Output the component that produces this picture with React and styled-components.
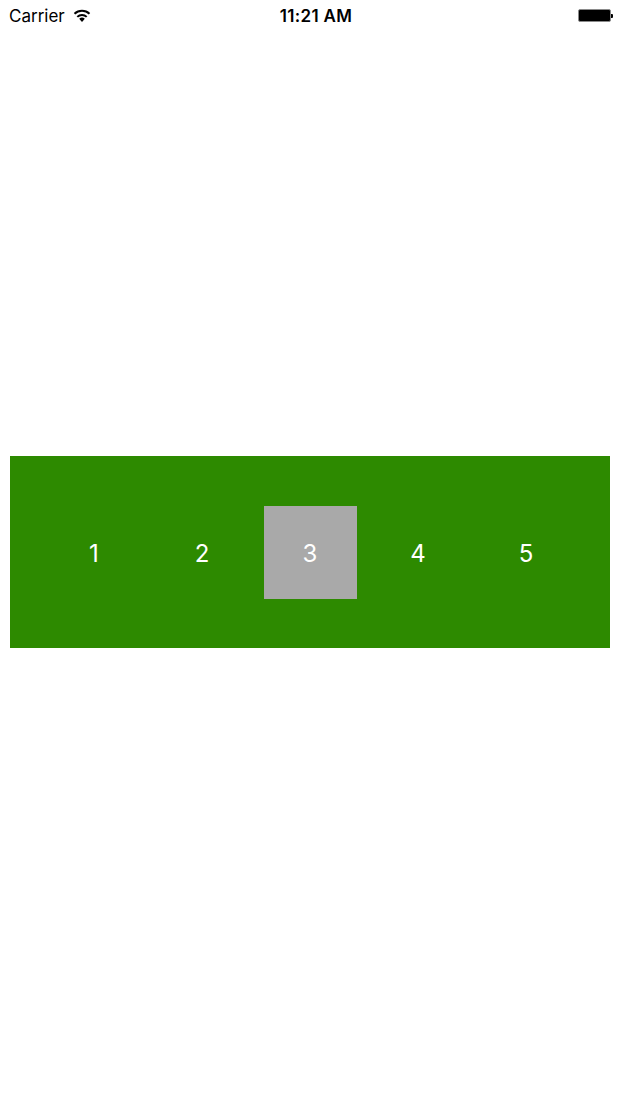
import React from 'react'
import styled, { createGlobalStyle } from 'styled-components'

const GlobalStyle = createGlobalStyle`
    html, body {
        margin: 0;
        padding: 0;
        background: #ffffff;
    }
    body {
        font-family: "Helvetica Neue", Inter, "Liberation Sans", Arial, sans-serif;
    }
`

const pages = ['1', '2', '3', '4', '5']

function WifiIcon() {
    return (
        <svg width="18" height="13" viewBox="0 0 18 13">
            <path d="M9 13 L6.2 9.8 A4.2 4.2 0 0 1 11.8 9.8 Z" fill="#000" />
            <path d="M4.3 7.9 A6.8 6.8 0 0 1 13.7 7.9" stroke="#000" strokeWidth="2" fill="none" />
            <path d="M1.5 4.8 A10.8 10.8 0 0 1 16.5 4.8" stroke="#000" strokeWidth="2" fill="none" />
        </svg>
    )
}

function App() {
    return (
        <Screen>
            <GlobalStyle />
            <StatusBar>
                <Left>
                    <span>Carrier</span>
                    <WifiIcon />
                </Left>
                <Time>11:21 AM</Time>
                <Right>
                    <Battery />
                    <Nub />
                </Right>
            </StatusBar>
            <Body>
                <Pager>
                    {pages.map((page, i) => (
                        <Page key={page} $active={i === 2}>
                            <PageLabel>{page}</PageLabel>
                        </Page>
                    ))}
                </Pager>
            </Body>
        </Screen>
    )
}

const Screen = styled.div`
    width: 621px;
    height: 1104px;
    display: flex;
    flex-direction: column;
    background: #ffffff;
`

const StatusBar = styled.div`
    height: 32px;
    display: grid;
    grid-template-columns: 1fr auto 1fr;
    align-items: center;
    padding: 0 8px 0 9px;
    font-size: 17px;
    color: #000;
`

const Left = styled.div`
    display: flex;
    align-items: center;
    gap: 8px;
    svg {
        margin-top: -2px;
    }
`

const Time = styled.div`
    font-weight: 600;
    letter-spacing: 0.3px;
    margin-left: 10px;
`

const Right = styled.div`
    display: flex;
    align-items: center;
    justify-content: flex-end;
    margin-top: -1px;
`

const Battery = styled.div`
    width: 31px;
    height: 11px;
    background: #000;
    border: 1px solid #8a8a8a;
    border-radius: 2px;
`

const Nub = styled.div`
    width: 2px;
    height: 4px;
    background: #000;
    border-radius: 0 1px 1px 0;
`

const Body = styled.div`
    flex: 1;
    display: flex;
    flex-direction: column;
    padding: 424px 11px 0 10px;
`

const Pager = styled.div`
    height: 192px;
    background: #2d8a00;
    display: flex;
    align-items: center;
    padding: 0 30px;
`

const Page = styled.div`
    width: 108px;
    height: 93px;
    display: flex;
    justify-content: center;
    align-items: center;
    position: relative;
    &::before {
        content: '';
        position: absolute;
        top: 0;
        bottom: 0;
        left: 8px;
        right: 7px;
        background: ${props => (props.$active ? '#a9a9a9' : 'transparent')};
    }
`

const PageLabel = styled.span`
    position: relative;
    font-size: 24px;
    font-weight: 400;
    color: #ffffff;
    margin-top: 2px;
`

export default App
